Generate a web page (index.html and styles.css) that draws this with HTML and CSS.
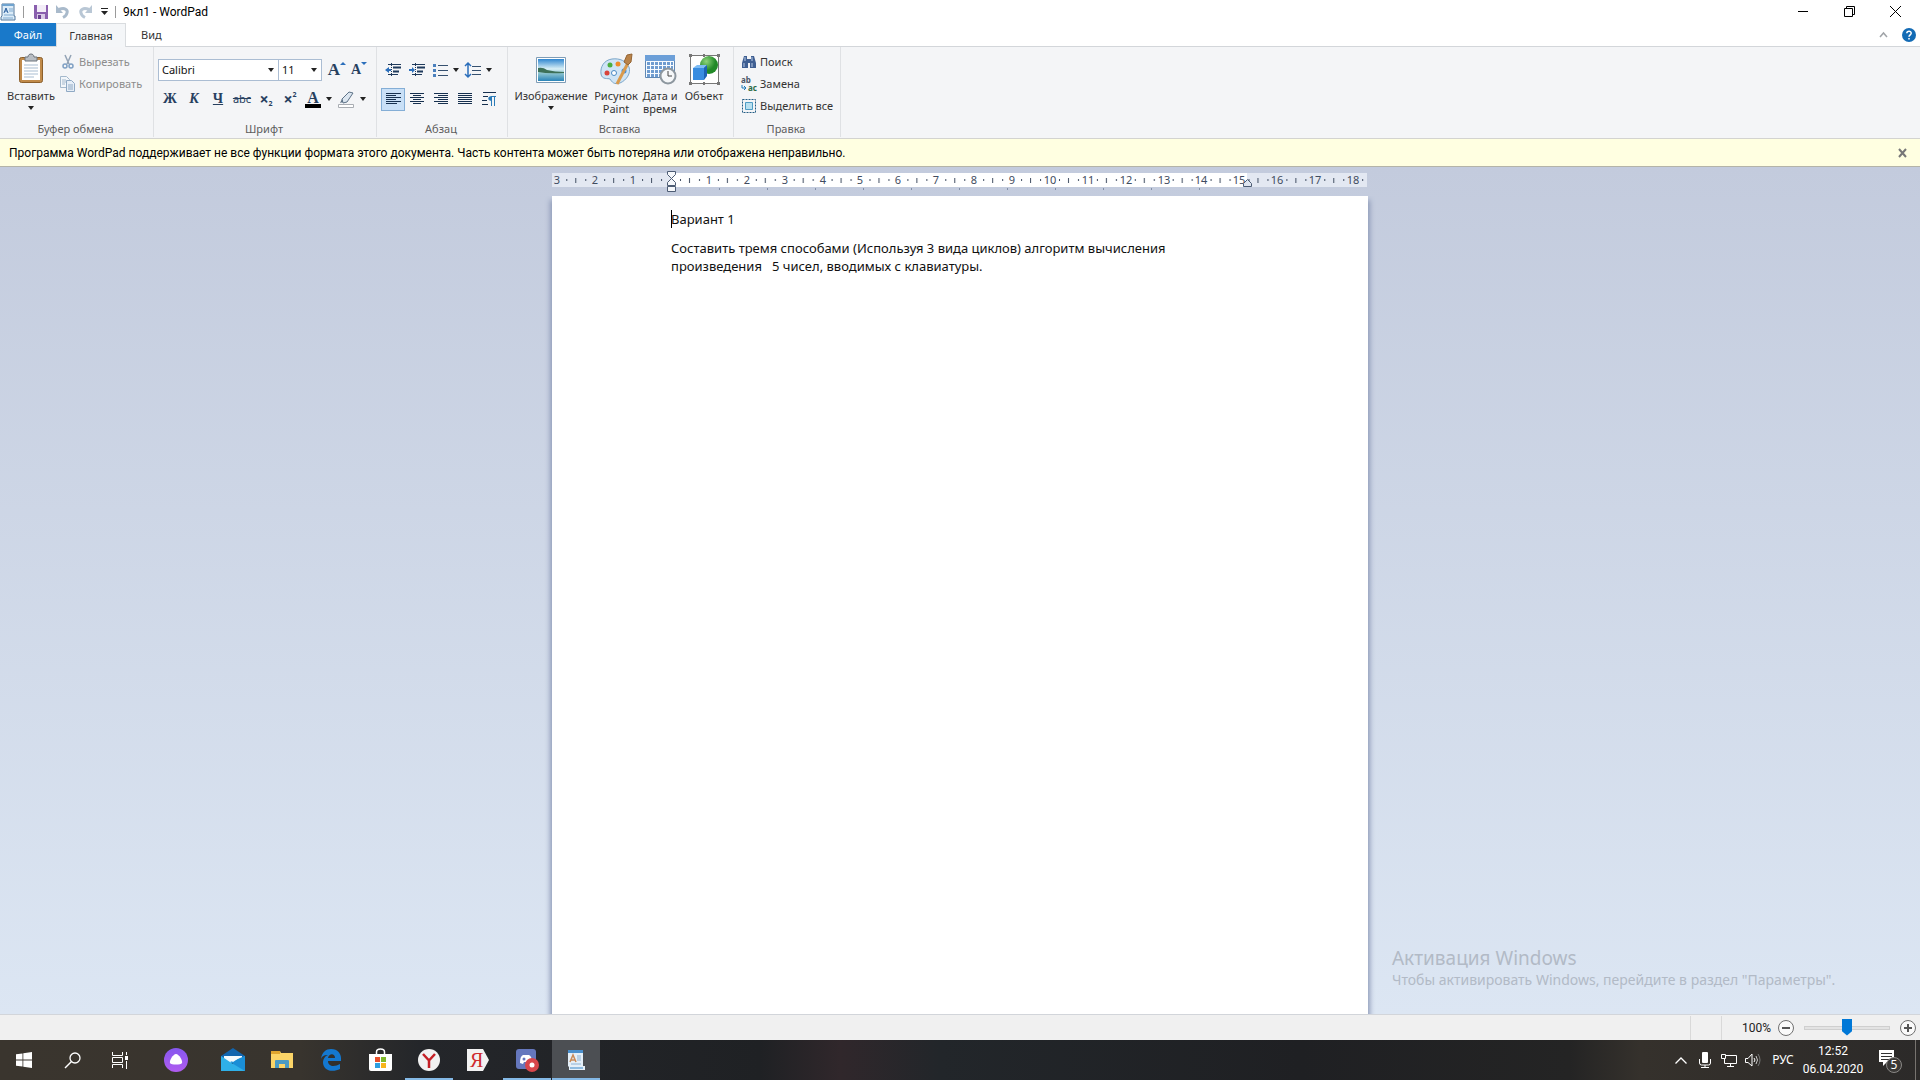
FILE: index.html
```html
<!DOCTYPE html>
<html lang="ru">
<head>
<meta charset="utf-8">
<title>9кл1 - WordPad</title>
<link rel="stylesheet" href="styles.css">
</head>
<body>
<header class="titlebar">
  <svg class="app-icon" width="16" height="18" viewBox="0 0 16 18"><path d="M2 1h12v12h1v4H1v-3l1-1z" fill="#dcecf8" stroke="#55789c"/><path d="M2 1h12v2H2z" fill="#6fa3cf"/><path d="M4 10l2-5 2 5M5 8h2" stroke="#2a5f9e" fill="none"/><path d="M9 6h4M9 8h4M4 12h9M3 15h10" stroke="#7fa9cf"/></svg>
  <span class="bar-sep"></span>
  <button class="quick" aria-label="Сохранить"><svg width="14" height="14" viewBox="0 0 14 14"><path d="M0 0h14v14H1l-1-1z" fill="#8a5fae"/><path d="M3 0h9v7H3z" fill="#f3edf8"/><path d="M3 9h8v5H3z" fill="#d9cbe6"/><path d="M4 10h3v4H4z" fill="#6b4292"/></svg></button>
  <button class="quick" aria-label="Отменить"><svg width="14" height="14" viewBox="0 0 14 14"><path d="M3 4.500C9 2 12 5 11 8c-.5 2-2 3.500-4 4.500" fill="none" stroke="#a9bacb" stroke-width="3"/><path d="M0 0v8h7z" fill="#a9bacb"/></svg></button>
  <button class="quick" aria-label="Вернуть"><svg width="14" height="14" viewBox="0 0 14 14"><path d="M11 4.500C5 2 2 5 3 8c.5 2 2 3.500 4 4.500" fill="none" stroke="#b9c7d5" stroke-width="3"/><path d="M14 0v8H7z" fill="#b9c7d5"/></svg></button>
  <button class="quick quick-more" aria-label="Настройка панели"><svg width="7" height="7" viewBox="0 0 7 7"><path d="M0 0h7v1H0zM0 3h7L3.500 7z" fill="#222"/></svg></button>
  <span class="bar-sep"></span>
  <h1 class="title">9кл1 - WordPad</h1>
  <div class="window-buttons">
    <button aria-label="Свернуть"><svg width="11" height="11"><path d="M0 5.500h10" stroke="#000"/></svg></button>
    <button aria-label="Развернуть"><svg width="11" height="11"><path d="M.5 2.500h8v8h-8zM2.500 2V.5h8v8H9" stroke="#000" fill="none"/></svg></button>
    <button aria-label="Закрыть"><svg width="11" height="11"><path d="M0 0l11 11M11 0L0 11" stroke="#000"/></svg></button>
  </div>
</header>

<nav class="tabs">
  <button class="tab tab-file">Файл</button>
  <button class="tab tab-active">Главная</button>
  <button class="tab">Вид</button>
  <div class="tab-tools">
    <button aria-label="Свернуть ленту"><svg width="9" height="6"><path d="M1 5l3.500-4L8 5" fill="none" stroke="#a0a4a8" stroke-width="1.500"/></svg></button>
    <button aria-label="Справка"><svg width="14" height="14" viewBox="0 0 14 14"><circle cx="7" cy="7" r="7" fill="#136bb5"/><path d="M4.800 5.200C5 2.500 9.300 2.600 9.200 5.200 9.200 6.700 7 7 7 8.800M7 10v1.500" stroke="#fff" fill="none" stroke-width="1.500"/></svg></button>
  </div>
</nav>

<section class="ribbon">
  <div class="group g-clip">
    <div class="group-body">
      <button class="big big-paste"><svg width="26" height="32" viewBox="0 0 26 32"><rect x="1.500" y="4.500" width="23" height="25" rx="2" fill="#c08a4a" stroke="#8b5f2c"/><path d="M4 7h18v20H4z" fill="#fff"/><path d="M6 12h14M6 15h14M6 18h14M6 21h14M6 24h10" stroke="#a9bdd1"/><path d="M7 4h3c0-4 6-4 6 0h3v4H7z" fill="#b8bdc3" stroke="#6d747c"/></svg><span>Вставить</span><i class="caret"></i></button>
      <div class="stack">
        <button class="row-btn off"><svg width="16" height="16" viewBox="0 0 16 16"><path d="M5 1l4 9M11 1L7 10" stroke="#93a3b5" stroke-width="1.500"/><circle cx="5" cy="12" r="2" fill="none" stroke="#7fa0c4" stroke-width="1.500"/><circle cx="11" cy="12" r="2" fill="none" stroke="#7fa0c4" stroke-width="1.500"/></svg>Вырезать</button>
        <button class="row-btn off"><svg width="16" height="16" viewBox="0 0 16 16"><path d="M.5.500h6l3 3v8h-9z" fill="#f2f6fa" stroke="#a3b8cc"/><path d="M2 4h4M2 6h4M2 8h3" stroke="#a3b8cc"/><path d="M6.500 4.500h5l3 3v8h-8z" fill="#e6eef7" stroke="#8fa9c4"/><path d="M8 9h5M8 11h5M8 13h5" stroke="#8fa9c4"/></svg>Копировать</button>
      </div>
    </div>
    <div class="group-name">Буфер обмена</div>
  </div>

  <div class="group g-font">
    <div class="group-body col">
      <div class="tools">
        <span class="combo combo-font"><select aria-label="Шрифт"><option>Calibri</option></select><i class="caret"></i></span><span class="combo combo-size"><select aria-label="Размер шрифта"><option>11</option></select><i class="caret"></i></span>
        <button class="tool grow" aria-label="Увеличить шрифт"><span class="serif big-a">A</span><i class="tri-up"></i></button>
        <button class="tool shrink" aria-label="Уменьшить шрифт"><span class="serif small-a">A</span><i class="tri-down"></i></button>
      </div>
      <div class="tools">
        <button class="tool serif">Ж</button>
        <button class="tool serif italic">К</button>
        <button class="tool serif under">Ч</button>
        <button class="tool strike">abc</button>
        <button class="tool script">×<sub>2</sub></button>
        <button class="tool script">×<sup>2</sup></button>
        <button class="tool wide"><span class="serif ink">A</span><i class="caret"></i></button>
        <button class="tool wide" aria-label="Цвет выделения"><svg width="17" height="17" viewBox="0 0 17 17"><path d="M4 8l7-7 4 1-6 9-4 1z" fill="#dce6f0" stroke="#5d7287"/><path d="M4 8l-2 4 3-1z" fill="#5d7287"/><path d="M.5 13.500h15v3H.5z" fill="#fff" stroke="#a9adb3"/></svg><i class="caret"></i></button>
      </div>
    </div>
    <div class="group-name">Шрифт</div>
  </div>

  <div class="group g-para">
    <div class="group-body col">
      <div class="tools">
        <button class="tool" aria-label="Уменьшить отступ"><svg width="16" height="14" viewBox="0 0 16 14"><path d="M3 1.500h13M3 11.500h10" stroke="#1f3a5c"/><path d="M8 4.500h8M8 8.500h6" stroke="#1f3a5c" stroke-width="2"/><path d="M6.500 0v14" stroke="#1f3a5c" stroke-dasharray="1 1"/><path d="M0 7l4-3v2h2v2H4v2z" fill="#2a6ebb"/></svg></button>
        <button class="tool" aria-label="Увеличить отступ"><svg width="16" height="14" viewBox="0 0 16 14"><path d="M3 1.500h13M3 11.500h10" stroke="#1f3a5c"/><path d="M8 4.500h8M8 8.500h6" stroke="#1f3a5c" stroke-width="2"/><path d="M6.500 0v14" stroke="#1f3a5c" stroke-dasharray="1 1"/><path d="M6 7L3 4v2H0v2h3v2z" fill="#2a6ebb"/></svg></button>
        <button class="tool wide" aria-label="Список"><svg width="15" height="14" viewBox="0 0 15 14"><path d="M5 2.500h10M5 7.500h10M5 12.500h10" stroke="#35506f"/><path d="M0 1h3v3H0zM0 6h3v3H0zM0 11h3v3H0z" fill="#4a80bd"/></svg><i class="caret"></i></button>
        <button class="tool wide" aria-label="Интервал"><svg width="16" height="16" viewBox="0 0 16 16"><path d="M7 4.500h9M7 8.500h9M7 12.500h9" stroke="#35506f"/><path d="M3 2v12M0 4l3-3 3 3M0 12l3 3 3-3" stroke="#2a6ebb" fill="none" stroke-width="1.500"/></svg><i class="caret"></i></button>
      </div>
      <div class="tools">
        <button class="tool pressed" aria-label="По левому краю"><svg width="15" height="12"><path d="M0 .5h15M0 2.500h10M0 4.500h15M0 6.500h10M0 8.500h15M0 10.500h11" stroke="#16304f"/></svg></button>
        <button class="tool" aria-label="По центру"><svg width="14" height="12"><path d="M0 .5h14M3 2.500h8M0 4.500h14M3 6.500h8M0 8.500h14M3 10.500h8" stroke="#16304f"/></svg></button>
        <button class="tool" aria-label="По правому краю"><svg width="14" height="12"><path d="M0 .5h14M4 2.500h10M0 4.500h14M4 6.500h10M0 8.500h14M4 10.500h10" stroke="#16304f"/></svg></button>
        <button class="tool" aria-label="По ширине"><svg width="14" height="12"><path d="M0 .5h14M0 2.500h14M0 4.500h14M0 6.500h14M0 8.500h14M0 10.500h14" stroke="#16304f"/></svg></button>
        <button class="tool" aria-label="Абзац"><svg width="14" height="14" viewBox="0 0 14 14"><path d="M1 .5h13M1 4.500h5M0 8.500h5M0 12.500h6" stroke="#16304f"/><path d="M9.500 4v10M12.500 4v10M9 4.500h5" stroke="#2a7bb8"/><path d="M10 4C5 4 5 9 10 9z" fill="#2a7bb8"/></svg></button>
      </div>
    </div>
    <div class="group-name">Абзац</div>
  </div>

  <div class="group g-insert">
    <div class="group-body">
      <button class="big"><svg width="32" height="32" viewBox="0 0 32 32"><defs><linearGradient id="sky" x2="0" y2="1"><stop offset="0" stop-color="#2f86d0"/><stop offset=".45" stop-color="#d9f0f6"/><stop offset=".65" stop-color="#8cc4d0"/><stop offset="1" stop-color="#2a84b8"/></linearGradient></defs><path d="M1.500 4.500h29v25h-29z" fill="#fff" stroke="#7e9cb6"/><path d="M3 6h26v22H3z" fill="url(#sky)"/><path d="M3 15q5-1 9 2 8 2 17 2v1q-16 1-26-1z" fill="#3d7058"/></svg><span>Изображение</span><i class="caret"></i></button>
      <button class="big"><svg width="32" height="32" viewBox="0 0 32 32"><path d="M12 6C4 7 0 14 1 21c1 6 7 4 9 5 2 3 4 6 10 4 7-3 11-10 9-16C26 8 20 5 12 6z" fill="#cfe4f5" stroke="#7ba6c9"/><circle cx="7" cy="20" r="2.500" fill="#d8433c"/><circle cx="10" cy="12" r="2.500" fill="#4cae3e"/><circle cx="18" cy="11" r="2.500" fill="#f08c28"/><circle cx="14" cy="20" r="2.500" fill="#fff" stroke="#4a8ac4"/><circle cx="24" cy="18" r="2.500" fill="#3f8bd8"/><path d="M28 10L17 31" stroke="#d99a4c" stroke-width="3"/><path d="M24 9l3-7 5-1-1 8-3 3z" fill="#b98349" stroke="#946535"/></svg><span>Рисунок<br>Paint</span></button>
      <button class="big"><svg width="32" height="32" viewBox="0 0 32 32"><path d="M1.500 2.500h29v22h-29z" fill="#f7fbff" stroke="#5f88b5"/><path d="M1 2h30v6H1z" fill="#6c9fd8"/><path d="M3 10.500h26M3 14.500h26M3 18.500h26M3 22.500h20" stroke="#6f9cd0" stroke-width="3" stroke-dasharray="3 1"/><circle cx="24" cy="23" r="7.500" fill="#f5f7f9" stroke="#8d979f" stroke-width="2"/><path d="M24 18v5h4" stroke="#444" fill="none"/></svg><span>Дата и<br>время</span></button>
      <button class="big"><svg width="32" height="32" viewBox="0 0 32 32"><defs><radialGradient id="ball" cx=".35" cy=".3"><stop offset="0" stop-color="#8fd47a"/><stop offset="1" stop-color="#228a28"/></radialGradient></defs><path d="M2.500 2.500h28v28h-28z" fill="#fff" stroke="#777"/><circle cx="21" cy="12" r="9" fill="url(#ball)"/><path d="M5 15l4-3h10l-3 3z" fill="#7dbcf5"/><path d="M16 15l3-3v11l-3 4z" fill="#1d63b4"/><path d="M5 15h11v12H5z" fill="#3a8de0"/><path d="M1 1h3v3H1zM29 1h3v3h-3zM1 29h3v3H1zM29 29h3v3h-3zM15 1h2v3h-2zM15 29h2v3h-2z" fill="#777"/></svg><span>Объект</span></button>
    </div>
    <div class="group-name">Вставка</div>
  </div>

  <div class="group g-edit">
    <div class="group-body">
      <div class="stack">
        <button class="row-btn"><svg width="16" height="16" viewBox="0 0 16 16"><path d="M3 2h3v3h4V2h3l2 7v5H9V9H7v5H1V9z" fill="#3f5f92"/><path d="M3 9v4M11 9v4M4 3v4M11 3v4" stroke="#b9cbe6"/></svg>Поиск</button>
        <button class="row-btn"><svg width="16" height="16" viewBox="0 0 16 16"><text x="0" y="7" class="ab">ab</text><text x="7" y="15" class="ac">ac</text><path d="M1 9v3h4M3 10l2 2-2 2" stroke="#1e7ab8" fill="none"/></svg>Замена</button>
        <button class="row-btn"><svg width="16" height="16" viewBox="0 0 16 16"><path d="M1.500 1.500h13v13h-13z" fill="none" stroke="#245d85" stroke-dasharray="2 1"/><path d="M4.500 4.500h7v7h-7z" fill="#b8e0f0" stroke="#4f9cc4"/></svg>Выделить все</button>
      </div>
    </div>
    <div class="group-name">Правка</div>
  </div>
</section>

<section class="notice" role="alert">
  <p>Программа WordPad поддерживает не все функции формата этого документа. Часть контента может быть потеряна или отображена неправильно.</p>
  <button aria-label="Закрыть сообщение"><svg width="9" height="8"><path d="M1 0l7 8M8 0L1 8" stroke="#777" stroke-width="2"/></svg></button>
</section>

<main class="workspace">
  <svg class="ruler" width="816" height="29" viewBox="0 1 816 29">
    <defs>
      <pattern id="ticks" x="119" width="37.900" height="14" patternUnits="userSpaceOnUse"><path d="M9 6h1v2H9zM28 6h1v2h-1zM18 5h1v5h-1z" fill="#3f4c60"/></pattern>
      <pattern id="tabs" x="167" width="48" height="30" patternUnits="userSpaceOnUse"><path d="M0 22h1v2H0z" fill="#8390a8"/></pattern>
    </defs>
    <path d="M0 7h815v14H0z" fill="#e3e8f2"/>
    <path d="M119 7h576v14H119z" fill="#fff"/>
    <path d="M0 0h815v14H0z" fill="url(#ticks)" transform="translate(0 7)"/>
    <path d="M130 20h565v6H130z" fill="url(#tabs)"/>
    <g class="ruler-num">
      <text x="5" y="18">3</text><text x="43" y="18">2</text><text x="81" y="18">1</text>
      <text x="157" y="18">1</text><text x="195" y="18">2</text><text x="233" y="18">3</text><text x="271" y="18">4</text><text x="308" y="18">5</text><text x="346" y="18">6</text><text x="384" y="18">7</text><text x="422" y="18">8</text><text x="460" y="18">9</text><text x="498" y="18">10</text><text x="536" y="18">11</text><text x="574" y="18">12</text><text x="612" y="18">13</text><text x="649" y="18">14</text><text x="687" y="18">15</text><text x="725" y="18">16</text><text x="763" y="18">17</text><text x="801" y="18">18</text>
    </g>
    <path d="M115.500 5.500h8v3l-4 4 4 4v3h-8v-3l4-4-4-4zM115.500 20.500h8v5h-8z" fill="#f6f8fb" stroke="#4d5c74"/>
    <path d="M691.500 20.500v-3l4-4 4 4v3z" fill="#dfe5f0" stroke="#4d5c74"/>
  </svg>
  <article class="page">
    <p><span class="cursor"></span>Вариант 1</p>
    <p>Составить тремя способами (Используя 3 вида циклов) алгоритм вычисления<br>произведения &nbsp; 5 чисел, вводимых с клавиатуры.</p>
  </article>
  <aside class="activation"><strong>Активация Windows</strong><span>Чтобы активировать Windows, перейдите в раздел "Параметры".</span></aside>
</main>

<footer class="status">
  <span class="cell"></span>
  <label for="zoom">100%</label>
  <button aria-label="Уменьшить"><svg width="16" height="16"><circle cx="8" cy="8" r="7.500" fill="#fafafa" stroke="#707070"/><path d="M4 8h8" stroke="#555" stroke-width="2"/></svg></button>
  <input id="zoom" type="range" min="0" max="100" value="50">
  <button aria-label="Увеличить"><svg width="16" height="16"><circle cx="8" cy="8" r="7.500" fill="#fafafa" stroke="#707070"/><path d="M4 8h8M8 4v8" stroke="#555" stroke-width="2"/></svg></button>
</footer>

<nav class="taskbar">
  <button aria-label="Пуск"><svg width="16" height="16" viewBox="0 0 16 16"><path d="M0 2.300L6.500 1.400V7.600H0zM7.300 1.300L16 0v7.600H7.300zM0 8.400h6.500v6.200L0 13.700zM7.300 8.400H16V16l-8.700-1.300z" fill="#fff"/></svg></button>
  <button aria-label="Поиск"><svg width="17" height="17"><circle cx="11" cy="6" r="5" fill="none" stroke="#fff" stroke-width="1.300"/><path d="M7.500 9.500L1 16" stroke="#fff" stroke-width="1.500"/></svg></button>
  <button aria-label="Представление задач"><svg width="17" height="17"><path d="M.5 0v3.500h10V0M.5 16v-3.500h10V16M.5 5.500h10v5H.5zM14.500 0v3M14.500 9v8" fill="none" stroke="#fff"/><path d="M13 4h3v4h-3z" fill="#fff"/></svg></button>
  <button class="task-alice" aria-label="Алиса"><svg width="24" height="24"><defs><linearGradient id="al" x2="0" y2="1"><stop offset="0" stop-color="#8657ee"/><stop offset="1" stop-color="#b05cf0"/></linearGradient></defs><circle cx="12" cy="12" r="12" fill="url(#al)"/><path d="M12 6c3 0 7 7 6 9s-11 2-12 0 3-9 6-9z" fill="#fff"/></svg></button>
  <button aria-label="Почта"><svg width="24" height="24"><path d="M0 8l12-8 12 8v5H0z" fill="#1265ae"/><path d="M3 8h18v7H3z" fill="#f2f8fc"/><path d="M0 8l12 8 12-8v15H0z" fill="#2fb0e8"/><path d="M24 8v15L9 14z" fill="#1a8ed6"/><path d="M3 8h18l-9 6z" fill="#f5fafd"/></svg></button>
  <button aria-label="Проводник"><svg width="22" height="20"><path d="M0 1h9l1 2h12v15H0z" fill="#fbd467"/><path d="M0 1h9v3H0z" fill="#dfa52f"/><path d="M4 18v-7q0-1 1-1h12q1 0 1 1v7h-4v-4H8v4z" fill="#4a9bc4"/></svg></button>
  <button aria-label="Edge"><svg width="20" height="22" viewBox="0 0 20 22"><path d="M0 10C1 3 5 0 10 0c7 0 10 5 10 9v3H7c0 6 7 6 12 3v5c-6 3-16 3-17-6 0-4 2-7 5-8-5 0-6 2-7 4zm7-1h7c0-5-6-5-7 0z" fill="#1478d0"/></svg></button>
  <button aria-label="Магазин"><svg width="23" height="24"><path d="M7.500 7V4q0-3 4-3t4 3v3" stroke="#fff" fill="none" stroke-width="1.500"/><path d="M0 6h23v15q0 2-2 2H2q-2 0-2-2z" fill="#fff"/><path d="M6 9h5v5H6z" fill="#e8502b"/><path d="M12 9h5v5h-5z" fill="#7fb92a"/><path d="M6 15h5v5H6z" fill="#2e9fe0"/><path d="M12 15h5v5h-5z" fill="#f7b51c"/></svg></button>
  <button class="open" aria-label="Яндекс Браузер"><svg width="22" height="22"><circle cx="11" cy="11" r="11" fill="#f1f1f1"/><path d="M5 5l6 6.500L17 5M11 11v8" stroke="#c41f25" fill="none" stroke-width="2.500"/></svg></button>
  <button aria-label="Яндекс"><svg width="22" height="22"><path d="M0 0h16l6 11-6 11H0z" fill="#f2f2f2"/><text x="3" y="18" class="ya">Я</text></svg></button>
  <button class="open" aria-label="Discord"><svg width="22" height="22"><rect width="20" height="20" rx="3" fill="#6577bd"/><path d="M4 14q0-7 3-8h6q3 1 3 8l-3 1-1-2H8l-1 2z" fill="#fff"/><circle cx="8" cy="10" r="1.500" fill="#6577bd"/><circle cx="16" cy="16" r="7" fill="#d8464b"/><circle cx="16" cy="16" r="2.500" fill="#fff"/></svg></button>
  <button class="open current" aria-label="WordPad"><svg width="18" height="22"><path d="M1 2h15v15h2v4H2v-3l-1-1z" fill="#e4eff8"/><path d="M1 1h15v3H1z" fill="#4a8fcc"/><path d="M3 13l3-7 3 7M4 11h4" stroke="#c98a58" fill="none" stroke-width="1.500"/><path d="M10 7h4M10 9h4M10 11h4M4 15h10" stroke="#8cb2d4"/><path d="M3 18h13v2H3z" fill="#8ebbe0"/></svg></button>
  <div class="tray">
    <button aria-label="Скрытые значки"><svg width="12" height="7"><path d="M.5 6.500L6 1l5.500 5.500" stroke="#fff" fill="none" stroke-width="1.300"/></svg></button>
    <button aria-label="Микрофон"><svg width="12" height="18"><rect x="3" y="1" width="6" height="11" rx="1" fill="#fff"/><path d="M.5 8v4q0 2 2 2h7q2 0 2-2V8M6 14v2M2 16.500h8" stroke="#fff" fill="none"/></svg></button>
    <button aria-label="Сеть"><svg width="17" height="15"><path d="M5 2.500h10.500v8h-12V6M9.500 11v3M6 13.500h7M.5 1.500h4v4h-4z" stroke="#fff" fill="none"/></svg></button>
    <button aria-label="Громкость"><svg width="16" height="14"><path d="M.5 5.500H3L7 1v12L3 9.500H.5z" fill="none" stroke="#fff"/><path d="M9 5q2 2 0 4" stroke="#fff" fill="none"/><path d="M11 3q3 4 0 8" stroke="#ccc" fill="none"/><path d="M13 1q4 6 0 12" stroke="#777" fill="none"/></svg></button>
    <button class="lang">РУС</button>
    <button class="clock"><span>12:52</span><span>06.04.2020</span></button>
    <button class="notes" aria-label="Уведомления"><svg width="24" height="22"><path d="M1 1h15v12H9l-4 4v-4H1z" fill="#fff"/><path d="M3 4.500h11M3 7.500h11M3 10.500h8" stroke="#333"/><circle cx="16" cy="16" r="7.500" fill="#3a3836" stroke="#8a8886"/><text x="16" y="20" class="badge">5</text></svg></button>
  </div>
</nav>
</body>
</html>
```
FILE: styles.css
```css
* { box-sizing: border-box; }
body {
  margin: 0;
  height: 100vh;
  display: flex;
  flex-direction: column;
  overflow: hidden;
  background: #fff;
  color: #1e1e1e;
  font: 11px/16px "Noto Sans", "Open Sans", sans-serif;
}
button {
  display: flex;
  align-items: center;
  justify-content: center;
  flex: none;
  margin: 0;
  padding: 0;
  border: 0;
  background: none;
  color: inherit;
  font: inherit;
}
svg { display: block; flex: none; overflow: visible; }

/* Title bar */
.titlebar { display: flex; align-items: center; height: 23px; }
.app-icon { margin-right: 7px; }
.bar-sep { width: 1px; height: 12px; background: #9a9a9a; }
.quick { width: 22px; height: 22px; }
.bar-sep + .quick { margin-left: 6px; }
.quick-more { width: 16px; margin-right: 3px; }
.title { margin: 0 0 0 7px; font-size: 12px; font-weight: 400; color: #000; font-family: Roboto, sans-serif; }
.window-buttons { display: flex; margin-left: auto; padding-right: 2px; }
.window-buttons button { width: 46px; height: 21px; }

/* Tabs */
.tabs { display: flex; height: 24px; border-bottom: 1px solid #d3d6da; }
.tab { padding: 0 15px; height: 23px; color: #333; }
.tab-file { width: 56px; padding: 0; background: #1979ca; color: #fff; }
.tab-active { width: 70px; height: 24px; padding: 0; background: #f4f6f8; border: 1px solid #d9dcdf; border-bottom: 0; }
.tab-tools { display: flex; gap: 14px; margin-left: auto; padding-right: 4px; }

/* Ribbon */
.ribbon { display: flex; height: 92px; background: #f4f5f7; border-bottom: 1px solid #d3d3d0; }
.group { display: flex; flex-direction: column; height: 90px; border-right: 1px solid #dfe1e4; flex: none; }
.group-body { display: flex; height: 74px; }
.group-body.col { flex-direction: column; gap: 5px; padding-top: 11px; }
.group-name { padding-right: 2px; text-align: center; color: #5c5c5c; }
.g-clip { width: 154px; }
.g-font { width: 223px; }
.g-para { width: 131px; }
.g-insert { width: 226px; }
.g-edit { width: 107px; }
.caret { width: 0; height: 0; border: 3px solid transparent; border-top: 4px solid #222; border-bottom: 0; flex: none; }
.big { flex-direction: column; justify-content: flex-start; padding-top: 6px; line-height: 13px; color: #333; }
.big svg { margin-bottom: 4px; }
.big .caret { margin-top: 4px; }
.g-clip .big { width: 60px; padding-left: 2px; }
.g-insert .big { width: 44px; }
.g-insert .big:first-child { width: 86px; }
.stack { display: flex; flex-direction: column; padding-top: 4px; }
.row-btn { justify-content: flex-start; height: 22px; gap: 3px; color: #333; }
.g-edit .stack { padding-left: 7px; }
.off { color: #8d8d8d; }
.tools { display: flex; align-items: center; height: 24px; padding-left: 4px; }
.combo { display: flex; align-items: center; height: 22px; border: 1px solid #abbdd3; background: #fff; padding-right: 4px; }
.combo-font { width: 121px; }
.combo-size { width: 44px; margin-left: -1px; margin-right: 4px; }
.combo select { flex: 1; min-width: 0; padding: 0 0 0 3px; appearance: none; border: 0; background: none; color: #111; font: inherit; }
.tool { width: 24px; height: 23px; color: #27405f; }
.wide { width: 33px; gap: 5px; }
.serif { font-family: "Liberation Serif", serif; font-weight: 700; font-size: 14px; }
.big-a { font-size: 17px; }
.small-a { font-size: 14px; }
.grow, .shrink { width: 22px; }
.tri-up, .tri-down { align-self: flex-start; border: 3px solid transparent; margin-top: 3px; }
.tri-up { border-top: 0; border-bottom: 3px solid #2a6ebb; }
.tri-down { border-bottom: 0; border-top: 3px solid #2a6ebb; }
.italic { font-style: italic; }
.under { text-decoration: underline; }
.strike { text-decoration: line-through; }
.script { font-weight: 700; font-size: 16px; }
.script sub, .script sup { font-size: 7px; line-height: 8px; }
.script sub { align-self: flex-end; padding-bottom: 3px; }
.script sup { align-self: flex-start; padding-top: 3px; }
.ink { width: 16px; font-size: 16px; line-height: 13px; border-bottom: 4px solid #000; }
.pressed { background: #c9e0f7; border: 1px solid #84aed6; }
.ab, .ac { font: 700 8px "Noto Sans", sans-serif; fill: #4a5568; }
.ac { fill: #2b6b45; }

/* Warning strip */
.notice { display: flex; align-items: center; height: 28px; padding: 0 13px 0 9px; background: #ffffe1; border-bottom: 1px solid #b4b4a8; color: #000; font-family: Roboto, sans-serif; font-size: 12px; }
.notice p { margin: 0 auto 0 0; }

/* Document area */
.workspace { position: relative; flex: 1; min-height: 0; display: flex; flex-direction: column; align-items: center; background: linear-gradient(#c3cbdd, #dce6f3); }
.ruler { flex: none; }
.ruler-num { font-size: 11px; text-anchor: middle; fill: #3f4c60; }
.page { flex: 1; width: 816px; padding: 14px 119px; background: #fff; color: #111; font-size: 13px; line-height: 18px; box-shadow: 0 6px 5px 2px #8f9bb8; clip-path: inset(0 -8px); }
.page p { margin: 0 0 11px; white-space: nowrap; }
.cursor { display: inline-block; width: 1px; height: 18px; margin-right: -1px; background: #000; vertical-align: top; }
.activation { position: absolute; left: 1392px; bottom: 24px; display: flex; flex-direction: column; color: #b2bac6; font-size: 14px; line-height: 20px; white-space: nowrap; }
.activation strong { font-weight: 400; font-size: 19px; line-height: 24px; }

/* Status bar */
.status { display: flex; align-items: center; height: 26px; background: #f0f0f0; border-top: 1px solid #d2d5da; justify-content: flex-end; padding-right: 4px; color: #222; }
.cell { width: 32px; height: 24px; margin-right: 20px; border: solid #d9d9d9; border-width: 0 1px; }
.status label { margin-right: 7px; font-family: Roboto, sans-serif; font-size: 12px; }
.status input { width: 86px; height: 20px; margin: 0 10px; appearance: none; background: none; }
.status input::-webkit-slider-runnable-track { height: 4px; background: #e3e3e3; border: 1px solid #cfcfcf; }
.status input::-webkit-slider-thumb { appearance: none; width: 10px; height: 17px; margin-top: -8px; background: #0078d7; clip-path: polygon(0 0, 100% 0, 100% 75%, 50% 100%, 0 75%); }

/* Taskbar */
.taskbar { display: flex; gap: 1px; height: 40px; background: linear-gradient(90deg, #3a352e 0, #38342e 300px, #24262a 420px, #1f2124 760px, #30272b 840px, #22262a 940px, #1f2023 1300px, #242424 1570px, #35312c 1640px, #2c2a29 100%); color: #fff; }
.taskbar > button { width: 48px; }
.taskbar > button:nth-child(-n+3) { margin-right: -1px; }
.taskbar > .task-alice { width: 64px; }
.open { box-shadow: inset 0 -2px #84b9e6; }
.current { background: #4c4f53; }
.tray { display: flex; margin-left: auto; }
.tray button { width: 24px; }
.tray .lang { width: 36px; font-size: 12px; }
.tray .clock { width: 64px; flex-direction: column; font-family: Roboto, sans-serif; font-size: 12px; line-height: 18px; }
.tray .notes { width: 51px; margin-right: 4px; border-right: 1px solid #77736f; }
.ya { font: 20px "Liberation Serif", serif; fill: #cf2a2e; }
.badge { font-size: 12px; text-anchor: middle; fill: #fff; }
```
